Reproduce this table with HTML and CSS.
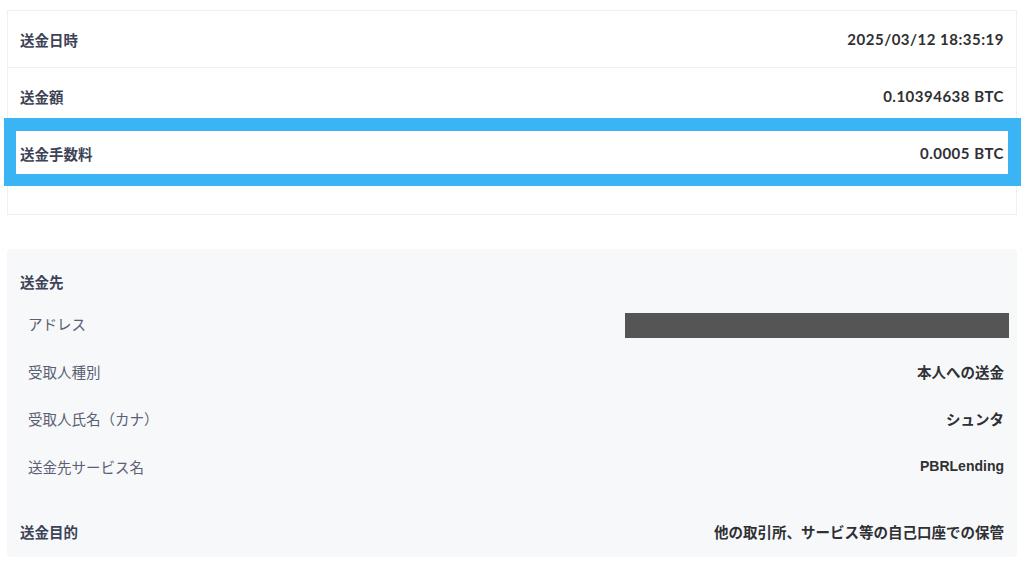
FILE: index.html
```html
<!DOCTYPE html>
<html lang="ja">
<head>
<meta charset="utf-8">
<title>送金詳細</title>
<link rel="stylesheet" href="styles.css">
</head>
<body>
<div class="page">
  <div class="summary">
    <div class="row">
      <span class="label">送金日時</span>
      <span class="value num">2025/03/12 18:35:19</span>
    </div>
    <div class="row">
      <span class="label">送金額</span>
      <span class="value num">0.10394638 BTC</span>
    </div>
    <div class="row row-highlight">
      <span class="label">送金手数料</span>
      <span class="value num">0.0005 BTC</span>
      <span class="highlight"></span>
    </div>
  </div>

  <div class="dest">
    <div class="dest-title">送金先</div>
    <div class="dest-row">
      <span class="dest-label">アドレス</span>
      <span class="redacted"></span>
    </div>
    <div class="dest-row">
      <span class="dest-label">受取人種別</span>
      <span class="dest-value">本人への送金</span>
    </div>
    <div class="dest-row">
      <span class="dest-label">受取人氏名（カナ）</span>
      <span class="dest-value">シュンタ</span>
    </div>
    <div class="dest-row">
      <span class="dest-label">送金先サービス名</span>
      <span class="dest-value latin">PBRLending</span>
    </div>
    <div class="purpose">
      <span class="purpose-label">送金目的</span>
      <span class="dest-value">他の取引所、サービス等の自己口座での保管</span>
    </div>
  </div>
</div>
</body>
</html>
```

FILE: styles.css
```css
* { box-sizing: border-box; }
html, body {
  margin: 0;
  padding: 0;
  background: #ffffff;
}
body {
  font-family: "Noto Sans CJK JP", "Noto Sans", sans-serif;
  font-size: 14.5px;
  color: #2c2c2c;
}
.page {
  padding: 10px 7px 0;
}
.summary {
  border: 1px solid #eef0f3;
  padding-bottom: 33px;
}
.row {
  height: 57px;
  display: flex;
  align-items: center;
  justify-content: space-between;
  padding: 0 12px;
  border-bottom: 1px solid #eef0f3;
  background: #fff;
}
.row-highlight {
  height: 56px;
  border-bottom: none;
  position: relative;
}
.highlight {
  position: absolute;
  top: -7px;
  bottom: -5px;
  left: -4px;
  right: -5px;
  border-style: solid;
  border-color: #3bb4f6;
  border-width: 13px 13px 12px 12px;
  pointer-events: none;
}
.label {
  font-weight: 700;
  color: #3d4356;
}
.value {
  font-weight: 700;
  color: #2f3033;
}
.num {
  font-family: Lato, "Noto Sans CJK JP", sans-serif;
  font-size: 15px;
  letter-spacing: 0.5px;
}
.dest {
  margin-top: 34px;
  background: #f7f8fa;
  border-radius: 4px;
  padding: 13px 13px 6px;
}
.dest-title {
  height: 38px;
  display: flex;
  align-items: center;
  font-weight: 700;
  color: #3d4356;
}
.dest-row {
  height: 47.5px;
  display: flex;
  align-items: center;
  justify-content: space-between;
  padding-left: 8px;
}
.dest-label {
  color: #5a6072;
}
.dest-value {
  font-weight: 700;
  color: #2f3033;
}
.latin {
  font-family: "Liberation Sans", "Noto Sans CJK JP", sans-serif;
  font-size: 14px;
}
.redacted {
  width: 384px;
  height: 25px;
  background: #555555;
  margin-right: -5px;
  margin-top: 4px;
}
.purpose {
  margin-top: 21px;
  height: 40px;
  display: flex;
  align-items: center;
  justify-content: space-between;
}
.purpose-label {
  font-weight: 700;
  color: #3d4356;
}
```
